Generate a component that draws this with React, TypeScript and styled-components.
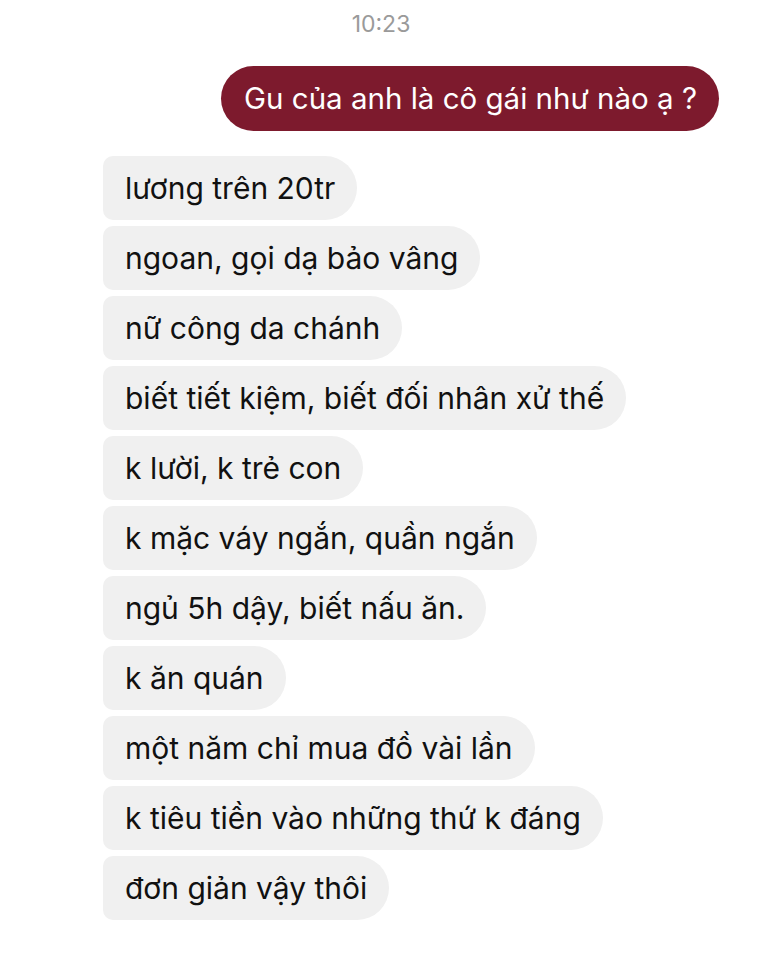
import React from "react";
import styled, { createGlobalStyle } from "styled-components";

const GlobalStyle = createGlobalStyle`
    html, body {
        margin: 0;
        padding: 0;
        background: #fff;
    }
    body {
        font-family: Inter, "Liberation Sans", Arial, sans-serif;
        -webkit-font-smoothing: antialiased;
    }
`;

const replies = [
    "lương trên 20tr",
    "ngoan, gọi dạ bảo vâng",
    "nữ công da chánh",
    "biết tiết kiệm, biết đối nhân xử thế",
    "k lười, k trẻ con",
    "k mặc váy ngắn, quần ngắn",
    "ngủ 5h dậy, biết nấu ăn.",
    "k ăn quán",
    "một năm chỉ mua đồ vài lần",
    "k tiêu tiền vào những thứ k đáng",
    "đơn giản vậy thôi",
];

export default function App() {
    return (
        <>
            <GlobalStyle />
            <Thread>
                <Timestamp>10:23</Timestamp>
                <SentRow>
                    <SentBubble>Gu của anh là cô gái như nào ạ ?</SentBubble>
                </SentRow>
                <ReceivedGroup>
                    {replies.map((text) => (
                        <ReceivedBubble key={text}>{text}</ReceivedBubble>
                    ))}
                </ReceivedGroup>
            </Thread>
        </>
    );
}

const Thread = styled.div`
    width: 762px;
    height: 960px;
    box-sizing: border-box;
    padding: 10px 43px 0 103px;
    display: flex;
    flex-direction: column;
    overflow: hidden;
`;

const Timestamp = styled.div`
    margin-left: -60px;
    text-align: center;
    font-size: 23px;
    line-height: 28px;
    color: #9a9a9a;
`;

const SentRow = styled.div`
    display: flex;
    justify-content: flex-end;
    margin-top: 28px;
`;

const SentBubble = styled.div`
    background: #7d1a2d;
    color: #fff;
    font-size: 29.5px;
    line-height: 36px;
    padding: 14px 22px 15px 23px;
    border-radius: 33px;
    white-space: nowrap;
`;

const ReceivedGroup = styled.div`
    display: flex;
    flex-direction: column;
    align-items: flex-start;
    gap: 6px;
    margin-top: 25px;
`;

const ReceivedBubble = styled.div`
    background: #f0f0f0;
    color: #111;
    font-size: 30px;
    line-height: 36px;
    padding: 14px 22px 14px 22px;
    border-radius: 10px 32px 32px 10px;
    white-space: nowrap;
`;
